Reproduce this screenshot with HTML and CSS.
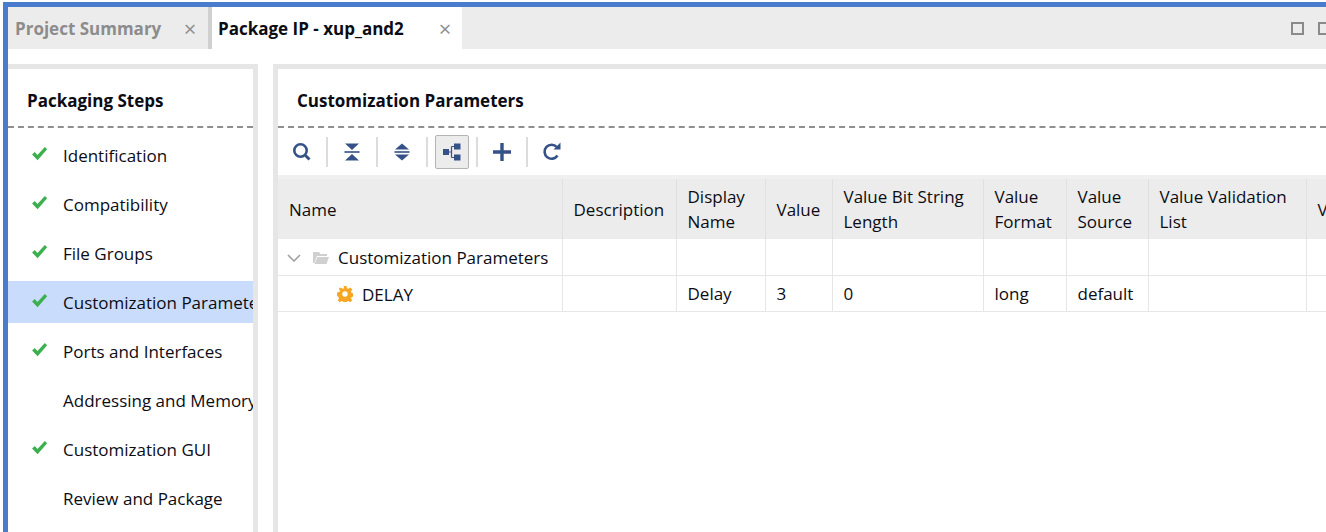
FILE: index.html
```html
<!DOCTYPE html>
<html lang="en">
<head>
<meta charset="utf-8">
<title>Package IP</title>
<link rel="stylesheet" href="styles.css">
</head>
<body>
<div class="frame">
  <div class="tabbar">
    <div class="tab tab-off"><span class="tab-label">Project Summary</span><span class="tab-x">×</span></div>
    <div class="tab-sep"></div>
    <div class="tab tab-on"><span class="tab-label">Package IP - xup_and2</span><span class="tab-x">×</span></div>
    <div class="tab-fill"></div>
    <div class="winbtn"></div>
    <div class="winbtn winbtn-cut"></div>
  </div>
  <div class="work">
    <aside class="panel steps">
      <h2 class="panel-title">Packaging Steps</h2>
      <ul class="step-list">
        <li class="step"><svg class="check" viewBox="0 0 16 14"><path d="M1 8l2.5-2.3 2.6 2.6L13 .8l2.2 2.2L6.2 13.4z"/></svg><span>Identification</span></li>
        <li class="step"><svg class="check" viewBox="0 0 16 14"><path d="M1 8l2.5-2.3 2.6 2.6L13 .8l2.2 2.2L6.2 13.4z"/></svg><span>Compatibility</span></li>
        <li class="step"><svg class="check" viewBox="0 0 16 14"><path d="M1 8l2.5-2.3 2.6 2.6L13 .8l2.2 2.2L6.2 13.4z"/></svg><span>File Groups</span></li>
        <li class="step step-on"><svg class="check" viewBox="0 0 16 14"><path d="M1 8l2.5-2.3 2.6 2.6L13 .8l2.2 2.2L6.2 13.4z"/></svg><span>Customization Parameters</span></li>
        <li class="step"><svg class="check" viewBox="0 0 16 14"><path d="M1 8l2.5-2.3 2.6 2.6L13 .8l2.2 2.2L6.2 13.4z"/></svg><span>Ports and Interfaces</span></li>
        <li class="step step-nocheck"><span>Addressing and Memory</span></li>
        <li class="step"><svg class="check" viewBox="0 0 16 14"><path d="M1 8l2.5-2.3 2.6 2.6L13 .8l2.2 2.2L6.2 13.4z"/></svg><span>Customization GUI</span></li>
        <li class="step step-nocheck"><span>Review and Package</span></li>
      </ul>
    </aside>
    <main class="panel params">
      <h2 class="panel-title">Customization Parameters</h2>
      <div class="toolbar">
        <button class="tool"><svg viewBox="0 0 20 20"><circle cx="8.5" cy="8.5" r="6.2" class="ic-ring"/><path d="M13.5 13.5l4 4" class="ic-line"/></svg></button>
        <i class="tool-sep"></i>
        <button class="tool"><svg viewBox="0 0 20 20"><path d="M3 1.5h14L10 8z" class="ic-fill"/><path d="M3 18.500h14L10 12z" class="ic-fill"/><rect x="2.500" y="9.200" width="15" height="1.600" class="ic-fill"/></svg></button>
        <i class="tool-sep"></i>
        <button class="tool"><svg viewBox="0 0 20 20"><path d="M10 1.500L17 7.500H3z" class="ic-fill"/><path d="M10 18.500L3 12.500h14z" class="ic-fill"/><rect x="2.500" y="9.200" width="15" height="1.600" class="ic-fill"/></svg></button>
        <i class="tool-sep"></i>
        <button class="tool tool-on"><svg viewBox="0 0 20 20"><rect x="1" y="7" width="6" height="6" class="ic-fill"/><rect x="12" y="1.500" width="6.500" height="6" class="ic-fill"/><rect x="12" y="12.500" width="6.500" height="6" class="ic-fill"/><path d="M7 10h2.500M9.500 4.500h3M9.500 15.500h3M9.500 4.500v11" class="ic-thin"/></svg></button>
        <i class="tool-sep"></i>
        <button class="tool"><svg viewBox="0 0 20 20"><path d="M1 10h18M10 1v18" class="ic-plus"/></svg></button>
        <i class="tool-sep"></i>
        <button class="tool"><svg viewBox="0 0 20 20"><path d="M15.500 13.500A7 7 0 1 1 14.800 5" class="ic-ring"/><path d="M11.500 7.500h7v-7z" class="ic-fill"/></svg></button>
      </div>
      <div class="table-wrap">
        <table class="grid">
          <colgroup>
            <col class="c1"><col class="c2"><col class="c3"><col class="c4"><col class="c5"><col class="c6"><col class="c7"><col class="c8"><col class="c9">
          </colgroup>
          <thead>
            <tr><th>Name</th><th>Description</th><th>Display Name</th><th>Value</th><th>Value Bit String Length</th><th>Value Format</th><th>Value Source</th><th>Value Validation List</th><th>Value Resolve</th></tr>
          </thead>
          <tbody>
            <tr>
              <td class="tree"><svg class="chev" viewBox="0 0 14 8"><path d="M1 1l6 6 6-6"/></svg><svg class="folder" viewBox="0 0 16 14"><path d="M0 1h6l1.500 2H14v2H4L1.500 12 0 12z"/><path d="M4.500 6H16l-2.500 7H1.500z"/></svg><span>Customization Parameters</span></td>
              <td></td><td></td><td></td><td></td><td></td><td></td><td></td><td></td>
            </tr>
            <tr>
              <td class="tree tree-leaf"><svg class="gear" viewBox="0 0 16 16"><path d="M6.500 0h3l.4 2.200 1.500.6L13.200 1.500l2.100 2.100-1.300 1.900.6 1.400 2.400.6v3l-2.400.4-.6 1.500 1.300 1.800-2.100 2.100-1.800-1.300-1.500.6-.4 2.400h-3l-.4-2.400-1.500-.6-1.800 1.300-2.100-2.100 1.300-1.800-.6-1.500L0 9.500v-3l2.400-.4.600-1.500L1.700 2.800l2.100-1.300 1.800 1.300 1.500-.6z"/><circle cx="8" cy="8" r="2.700" fill="#fff"/></svg><span>DELAY</span></td>
              <td></td><td>Delay</td><td>3</td><td>0</td><td>long</td><td>default</td><td></td><td></td>
            </tr>
          </tbody>
        </table>
      </div>
    </main>
  </div>
</div>
</body>
</html>
```
FILE: styles.css
```css
* { box-sizing: border-box; }
html, body { margin: 0; height: 100%; overflow: hidden; background: #fff; }
body {
  padding: 2px 0 0 3px;
  font-family: "Open Sans", "Noto Sans", "Liberation Sans", sans-serif;
  font-size: 17px;
  color: #0c0c14;
}
.frame {
  height: 530px;
  width: 1323px;
  border-top: 5px solid #4a7cce;
  border-left: 5px solid #4a7cce;
  display: flex;
  flex-direction: column;
  overflow: hidden;
}
.tabbar {
  height: 42px;
  flex: none;
  display: flex;
  background: #ececec;
}
.tab { display: flex; align-items: center; height: 42px; font-weight: 700; }
.tab-off { width: 200px; padding: 0 7px; color: #8c8c8c; }
.tab-on { width: 250px; padding: 0 6px; background: #fff; color: #0c0c14; }
.tab-label { flex: 1; white-space: nowrap; }
.tab-x { color: #8f8f8f; font-weight: 400; font-size: 22px; line-height: 1; width: 22px; text-align: center; }
.tab-sep { width: 4px; background: #d0d0d0; }
.tab-fill { flex: 1; }
.winbtn { width: 13px; height: 13px; border: 2px solid #8a8a8a; background: #ececec; margin: 15px 0 0 0; flex: none; }
.winbtn-cut { margin-left: 14px; margin-right: -5px; }
.work {
  flex: 1;
  min-height: 0;
  display: flex;
  gap: 15px;
  padding-top: 15px;
}
.panel {
  border-top: 5px solid #e6e6e6;
  display: flex;
  flex-direction: column;
  overflow: hidden;
  min-width: 0;
}
.steps { width: 250px; flex: none; border-right: 5px solid #e6e6e6; }
.params { flex: 1; border-left: 5px solid #e6e6e6; }
.panel-title {
  margin: 0;
  height: 59px;
  flex: none;
  padding: 20px 0 0 19px;
  font-size: 17px;
  font-weight: 700;
  line-height: 23px;
  border-bottom: 2px dashed #8f8f8f;
  white-space: nowrap;
}
.params .panel-title { border-bottom-color: #8f8f8f; }
.step-list { list-style: none; margin: 0; padding: 6px 0 0; }
.step {
  height: 42px;
  margin-bottom: 7px;
  display: flex;
  align-items: center;
  padding-left: 23px;
  white-space: nowrap;
  overflow: hidden;
}
.step-on { background: #c9dcfb; }
.step-nocheck { padding-left: 55px; }
.check { width: 17px; height: 15px; margin-right: 15px; flex: none; fill: #3cb04f; margin-top: -4px; }
.toolbar {
  height: 47px;
  flex: none;
  display: flex;
  align-items: center;
  padding-left: 7px;
  gap: 0;
}
.tool {
  width: 34px;
  height: 34px;
  padding: 0;
  border: 1px solid transparent;
  border-radius: 2px;
  background: none;
  display: flex;
  align-items: center;
  justify-content: center;
  flex: none;
}
.tool-on { background: #ececec; border-color: #b4b4b4; }
.tool svg { width: 20px; height: 20px; }
.ic-ring { fill: none; stroke: #345287; stroke-width: 2.6; }
.ic-line { fill: none; stroke: #345287; stroke-width: 3; }
.ic-fill { fill: #345287; }
.ic-thin { fill: none; stroke: #345287; stroke-width: 1.2; }
.ic-plus { fill: none; stroke: #345287; stroke-width: 3.4; }
.tool-sep { width: 2px; height: 30px; background: #dcdcdc; margin: 0 7px; flex: none; }
.tool-sep { margin: 0 7px 0 7px; }
.table-wrap { flex: 1; border-top: 4px solid #f0f0f0; overflow: hidden; }
.grid { border-collapse: collapse; table-layout: fixed; width: 1180px; }
.c1 { width: 284px; } .c2 { width: 114px; } .c3 { width: 89px; } .c4 { width: 67px; }
.c5 { width: 151px; } .c6 { width: 83px; } .c7 { width: 82px; } .c8 { width: 158px; } .c9 { width: 152px; }
.grid th {
  height: 60px;
  background: #ececec;
  border-right: 1px solid #e0e0e0;
  font-weight: 400;
  text-align: left;
  padding: 0 11px 0 11px;
  line-height: 25px;
  vertical-align: middle;
}
.grid td {
  height: 36px;
  padding: 0 11px;
  border-right: 1px solid #e6e6e6;
  border-bottom: 1px solid #e6e6e6;
  white-space: nowrap;
}
.grid td.tree { padding-left: 9px; }
.grid td.tree > * { vertical-align: middle; }
.chev { width: 14px; height: 8px; fill: none; stroke: #a0a0a0; stroke-width: 1.6; margin-right: 12px; }
.folder { width: 16px; height: 14px; fill: #d0d0d0; margin-right: 9px; }
.grid td.tree-leaf { padding-left: 59px; }
.gear { width: 16px; height: 16px; fill: #f5a623; margin-right: 9px; }
```
